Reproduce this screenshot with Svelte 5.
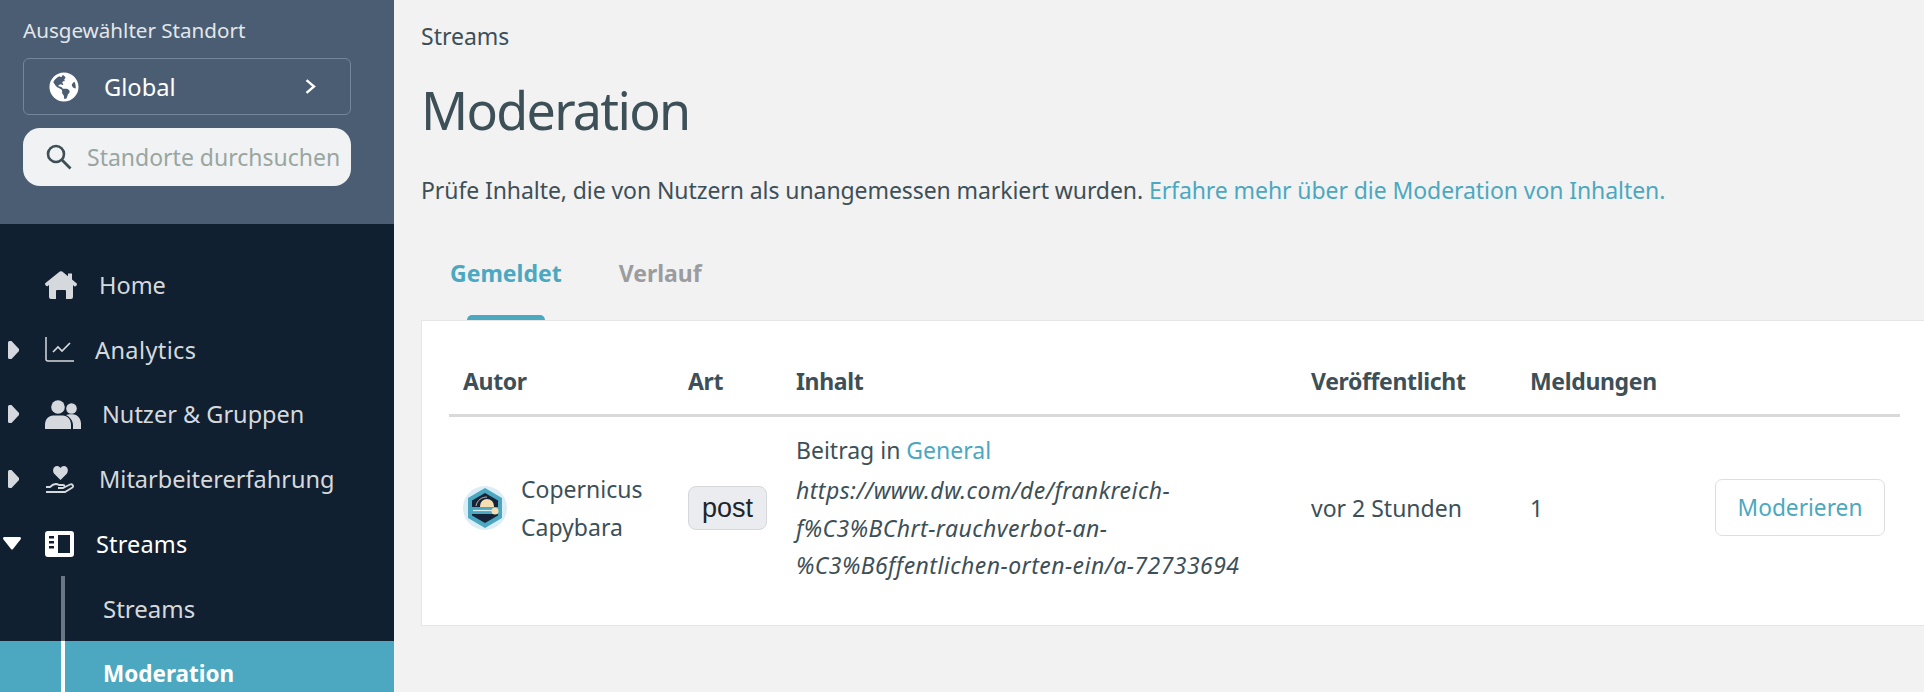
<script>
  const head = ['Autor', 'Art', 'Inhalt', 'Veröffentlicht', 'Meldungen', ''];
</script>

<div class="page">
  <aside class="side">
    <section class="loc">
      <div class="loc-label">Ausgewählter Standort</div>
      <div class="select">
        <svg class="globe" viewBox="0 0 496 512" aria-hidden="true">
          <path fill="#fff" d="M248 8C111.030 8 0 119.030 0 256s111.030 248 248 248 248-111.030 248-248S384.970 8 248 8zm82.290 357.600c-3.900 3.880-7.990 7.950-11.310 11.280-2.990 3-5.100 6.700-6.170 10.710-1.510 5.660-2.730 11.380-4.770 16.870l-17.390 46.850c-13.760 3-28 4.690-42.650 4.690v-27.380c1.690-12.620-7.640-36.260-22.630-51.250-6-6-9.370-14.140-9.370-22.630v-32.010c0-11.640-6.270-22.340-16.460-27.970-14.370-7.950-34.810-19.060-48.810-26.110-11.480-5.780-22.100-13.140-31.650-21.750l-.8-.72a114.792 114.792 0 0 1-18.060-20.740c-9.380-13.770-24.660-36.420-34.590-51.140 20.470-45.500 57.360-82.040 103.200-101.890l24.010 12.010C203.480 89.740 216 82.010 216 70.110v-11.300c7.990-1.290 16.120-2.110 24.450-2.420l28.300 28.300c6.250 6.250 6.250 16.380 0 22.630L264 112l-10.340 10.340c-3.120 3.120-3.120 8.190 0 11.310l4.690 4.690c3.120 3.120 3.120 8.190 0 11.310l-8 8a8.008 8.008 0 0 1-5.670 2.340h-8.990c-2.080 0-4.080.81-5.580 2.270l-9.920 9.650a8.008 8.008 0 0 0-1.580 9.310l15.590 31.190c2.660 5.320-1.210 11.580-7.150 11.580h-5.640c-1.930 0-3.790-.7-5.240-1.960l-9.280-8.060a16.017 16.017 0 0 0-15.550-3.100l-31.170 10.390a11.950 11.950 0 0 0-8.170 11.340c0 4.530 2.560 8.660 6.610 10.690l11.080 5.540c9.410 4.710 19.790 7.160 30.310 7.160s22.590 27.290 32 32h66.750c8.490 0 16.620 3.370 22.630 9.370l13.690 13.690a30.503 30.503 0 0 1 8.930 21.570 46.536 46.536 0 0 1-13.720 32.980zM417 274.250c-5.790-1.450-10.840-5-14.150-9.970l-17.980-26.970a23.970 23.970 0 0 1 0-26.620l19.590-29.380c2.320-3.470 5.500-6.280 9.240-8.150l12.980-6.490C440.200 193.590 448 223.870 448 256c0 8.670-.74 17.160-1.820 25.540L417 274.250z"/>
        </svg>
        <span class="global">Global</span>
        <svg class="chev" viewBox="0 0 11 15" aria-hidden="true"><path d="M1.500 1.200 9 7.500 1.500 13.800" fill="none" stroke="#fff" stroke-width="2.400"/></svg>
      </div>
      <div class="search">
        <svg class="mag" viewBox="0 0 26 26" aria-hidden="true"><circle cx="10" cy="10" r="8" fill="none" stroke="#3e5056" stroke-width="2.600"/><path d="M16 16l8.500 8.500" stroke="#3e5056" stroke-width="2.800"/></svg>
        <span class="ph">Standorte durchsuchen</span>
      </div>
    </section>

    <nav class="nav">
      <div class="item">
        <span class="caret"></span>
        <svg class="ic home" viewBox="0 0 32 28" aria-hidden="true"><path d="M14.800.6a2 2 0 0 1 2.400 0L23 5.300V2.500h4v6l4.500 3.800c.7.600.6 1.400.1 2l-.6.700c-.5.500-1.200.6-1.800.2L28 14v12a2 2 0 0 1-2 2h-5v-8a1 1 0 0 0-1-1h-8a1 1 0 0 0-1 1v8H6a2 2 0 0 1-2-2V14l-1.200 1c-.6.400-1.300.3-1.800-.2l-.6-.7c-.5-.6-.6-1.400.1-2z"/></svg>
        <span class="lbl l-home">Home</span>
      </div>
      <div class="item">
        <span class="caret"><svg viewBox="0 0 11 18" aria-hidden="true"><path d="M1.500 0h2L11 8v2l-7.500 8h-2A1.500 1.500 0 0 1 0 16.500v-15A1.500 1.500 0 0 1 1.500 0z"/></svg></span>
        <svg class="ic chart" viewBox="0 0 29 25" aria-hidden="true"><path d="M1 0v22a2 2 0 0 0 2 2h26" fill="none" stroke="#d5d9de" stroke-width="1.500"/><path d="M8 15l5-5 4 4 8-8" fill="none" stroke="#d5d9de" stroke-width="1.700"/></svg>
        <span class="lbl l-an">Analytics</span>
      </div>
      <div class="item">
        <span class="caret"><svg viewBox="0 0 11 18" aria-hidden="true"><path d="M1.500 0h2L11 8v2l-7.500 8h-2A1.500 1.500 0 0 1 0 16.500v-15A1.500 1.500 0 0 1 1.500 0z"/></svg></span>
        <svg class="ic users" viewBox="0 0 36 29" aria-hidden="true"><circle cx="13" cy="7" r="6.800"/><circle cx="26.500" cy="8.500" r="5.300"/><path d="M0 29v-4c0-6 4-9.500 8-9.500h10c4 0 8 3.500 8 9.500v4zM21 15c2-1 8-1 10 0 3 1.500 5 5 5 8.500V29h-8v-4c0-4-3-8-7-10z"/></svg>
        <span class="lbl l-us">Nutzer &amp; Gruppen</span>
      </div>
      <div class="item">
        <span class="caret"><svg viewBox="0 0 11 18" aria-hidden="true"><path d="M1.500 0h2L11 8v2l-7.500 8h-2A1.500 1.500 0 0 1 0 16.500v-15A1.500 1.500 0 0 1 1.500 0z"/></svg></span>
        <svg class="ic hand" viewBox="0 0 31 28" aria-hidden="true"><path d="M15.500 15 9.500 9C7 6.500 8 1 12 1c1.500 0 2.700.8 3.500 2C16.300 1.800 17.500 1 19 1c4 0 5 5.500 2.500 8z"/><path d="M1 22h4c3-3 6-4 9-2h4c2 0 2 3 0 3h-5M18 23l7-3.500c3-1 4 2 2 3.200L20 27H1" fill="none" stroke="#d5d9de" stroke-width="1.800"/></svg>
        <span class="lbl l-mi">Mitarbeitererfahrung</span>
      </div>
      <div class="item on">
        <span class="caret down"><svg viewBox="0 0 18 13" aria-hidden="true"><path d="M1.500 0h15c1.300 0 2 1.500 1 2.500L10 12c-.6.800-1.500.800-2 0L.5 2.500C-.5 1.500.2 0 1.500 0z"/></svg></span>
        <svg class="ic stream" viewBox="0 0 29 26" aria-hidden="true"><path fill-rule="evenodd" d="M3 0h23a3 3 0 0 1 3 3v20a3 3 0 0 1-3 3H3a3 3 0 0 1-3-3V3a3 3 0 0 1 3-3zM13 4v18h12V4zM4 5v2.500h5V5zM4 10v2.500h5V10zM4 15v2.500h5V15z"/></svg>
        <span class="lbl l-st">Streams</span>
      </div>
      <div class="sub">Streams</div>
      <div class="sub active">Moderation</div>
    </nav>
  </aside>

  <main class="main">
    <div class="crumb">Streams</div>
    <h1>Moderation</h1>
    <p class="intro">Prüfe Inhalte, die von Nutzern als unangemessen markiert wurden. <a href="#learn">Erfahre mehr über die Moderation von Inhalten.</a></p>

    <div class="tabs">
      <span class="tab cur">Gemeldet</span>
      <span class="tab">Verlauf</span>
    </div>

    <section class="card">
      <div class="table">
        <div class="thead">
          {#each head as h}<div>{h}</div>{/each}
        </div>
        <div class="tbody">
          <div class="author">
            <svg class="avatar" viewBox="0 0 44 44" aria-hidden="true">
              <circle cx="22" cy="22" r="22" fill="#dcedf6"/>
              <path d="M22 2 39 12v20L22 42 5 32V12z" fill="#4ba8c0"/>
              <path d="M22 7 35 14.500v15L22 37 9 29.500v-15z" fill="#14233a"/>
              <circle cx="24" cy="20" r="7" fill="#f5dfb0"/>
              <rect x="7" y="21" width="30" height="7" fill="#4ba8c0"/>
              <path d="M10 24.500h20" stroke="#d9eef3" stroke-width="1.200"/>
              <circle cx="32" cy="25" r="3.500" fill="#f5dfb0"/>
              <path d="M13 20c1-6 6-9 11-9" fill="none" stroke="#f5dfb0" stroke-width=".8"/>
            </svg>
            <span class="name">Copernicus Capybara</span>
          </div>
          <div class="kind"><span class="badge">post</span></div>
          <div class="content">
            <div>Beitrag in <a href="#general">General</a></div>
            <em>https://www.dw.com/de/frankreich-<br>f%C3%BChrt-rauchverbot-an-<br>%C3%B6ffentlichen-orten-ein/a-72733694</em>
          </div>
          <div class="mid">vor 2 Stunden</div>
          <div class="mid">1</div>
          <div class="mid"><button class="mod">Moderieren</button></div>
        </div>
      </div>
    </section>
  </main>
</div>

<style>
  :global(body) { margin: 0; overflow: hidden; background: #f2f2f2; }
  .page { display: flex; height: 692px; overflow: hidden; font-family: "Noto Sans", "Open Sans", sans-serif; color: #3d4f57; }
  .side { width: 394px; flex: none; background: #112031; overflow: hidden; height: 692px; }
  .loc { height: 224px; box-sizing: border-box; background: #4a5d72; padding: 18px 43px 0 23px; }
  .loc-label { font-size: 20.600px; line-height: 24px; color: #e3e6ea; white-space: nowrap; }
  .select { margin-top: 16px; height: 57px; box-sizing: border-box; border: 1px solid #75859a; border-radius: 6px; display: flex; align-items: center; padding-left: 25px; color: #fff; }
  .globe { width: 30px; height: 30px; flex: none; }
  .global { margin-left: 25px; width: 72px; font-size: 23.700px; }
  .chev { width: 11px; height: 15px; margin-left: 129px; flex: none; }
  .search { margin-top: 13px; height: 58px; border-radius: 17px; background: #f0f2f4; display: flex; align-items: center; padding-left: 23px; white-space: nowrap; overflow: hidden; }
  .mag { width: 26px; height: 26px; flex: none; }
  .ph { margin-left: 15px; font-size: 23px; color: #98a6a1; }

  .nav { padding-top: 29px; }
  .item { height: 64.600px; display: flex; align-items: center; color: #d5d9de; font-size: 23.500px; white-space: nowrap; }
  .item.on { color: #fff; }
  .caret { width: 45px; flex: none; display: flex; padding-left: 8px; box-sizing: border-box; }
  .caret.down { padding-left: 3px; }
  .caret svg { width: 11px; height: 18px; fill: #d5d9de; }
  .caret.down svg { width: 18px; height: 13px; fill: #fff; }
  .ic { flex: none; fill: #d5d9de; }
  .home { width: 32px; height: 28px; }
  .chart { width: 29px; height: 25px; }
  .users { width: 36px; height: 29px; }
  .hand { width: 31px; height: 28px; }
  .stream { width: 29px; height: 26px; fill: #fff; }
  .l-home { margin-left: 22px; }
  .l-an { margin-left: 21px; letter-spacing: .4px; }
  .l-us { margin-left: 21px; }
  .l-mi { margin-left: 23px; }
  .l-st { margin-left: 22px; letter-spacing: .15px; }
  .sub { height: 64.600px; display: flex; align-items: center; padding-left: 38px; margin-left: 61px; border-left: 4px solid #6b7682; color: #d5d9de; font-size: 24px; }
  .sub.active { margin-left: 0; padding: 2px 0 0 103px; box-sizing: border-box; border-left: 0; color: #fff; font-weight: 700; font-size: 22.500px; background: #4ba8c0 linear-gradient(#fff, #fff) 61px 0 / 4px 100% no-repeat; }

  .main { flex: 1; min-width: 0; padding-left: 27px; }
  .crumb { padding-top: 22px; font-size: 23px; line-height: 28px; }
  h1 { margin: 25px 0 0; font-size: 52px; line-height: 70px; font-weight: 400; letter-spacing: -1.700px; }
  .intro { margin: 30px 0 0; font-size: 23px; line-height: 30px; letter-spacing: -.08px; white-space: nowrap; }
  a { color: #4ba8c0; text-decoration: none; }
  .tabs { display: flex; height: 115px; padding-top: 52px; box-sizing: border-box; padding-left: 29px; font-weight: 700; font-size: 23px; color: #9a9c9f; line-height: 32px; gap: 57px; }
  .tab { position: relative; align-self: flex-start; }
  .tab.cur { color: #4ba8c0; }
  .tab.cur::after { content: ""; position: absolute; left: 17px; right: 17px; top: 58px; height: 5px; background: #4ba8c0; border-radius: 5px 5px 0 0; }

  .card { background: #fff; border: solid #e6e6e6; border-width: 1px 0 1px 1px; height: 306px; box-sizing: border-box; padding: 0 24px 0 27px; }
  .table { font-size: 23px; }
  .thead, .tbody { display: grid; grid-template-columns: 225px 108px 515px 219px 185px 1fr; padding: 0 14px; }
  .thead { height: 96px; align-items: end; padding-bottom: 17px; box-sizing: border-box; border-bottom: 3px solid #d9d9d9; font-weight: 700; font-size: 23px; letter-spacing: -.35px; line-height: 32px; }
  .tbody { height: 181px; align-items: center; }
  .author { display: flex; align-items: center; gap: 14px; padding-right: 40px; }
  .avatar { width: 44px; height: 44px; flex: none; }
  .name { line-height: 38px; }
  .badge { display: inline-block; box-sizing: border-box; width: 79px; height: 44px; line-height: 42px; text-align: center; font-family: "Liberation Sans", Arial, sans-serif; font-size: 27px; color: #212529; background: #eaecef; border: 1px solid #d5d7da; border-radius: 8px; }
  .content { line-height: 37.800px; white-space: nowrap; margin-top: 2px; }
  .content em { display: block; margin-top: 2px; font-style: italic; letter-spacing: .45px; }
  .mod { box-sizing: border-box; width: 170px; height: 57px; background: #fff; border: 1px solid #dedede; border-radius: 7px; font: inherit; font-size: 22.700px; color: #4ba8c0; padding: 0; }
</style>
